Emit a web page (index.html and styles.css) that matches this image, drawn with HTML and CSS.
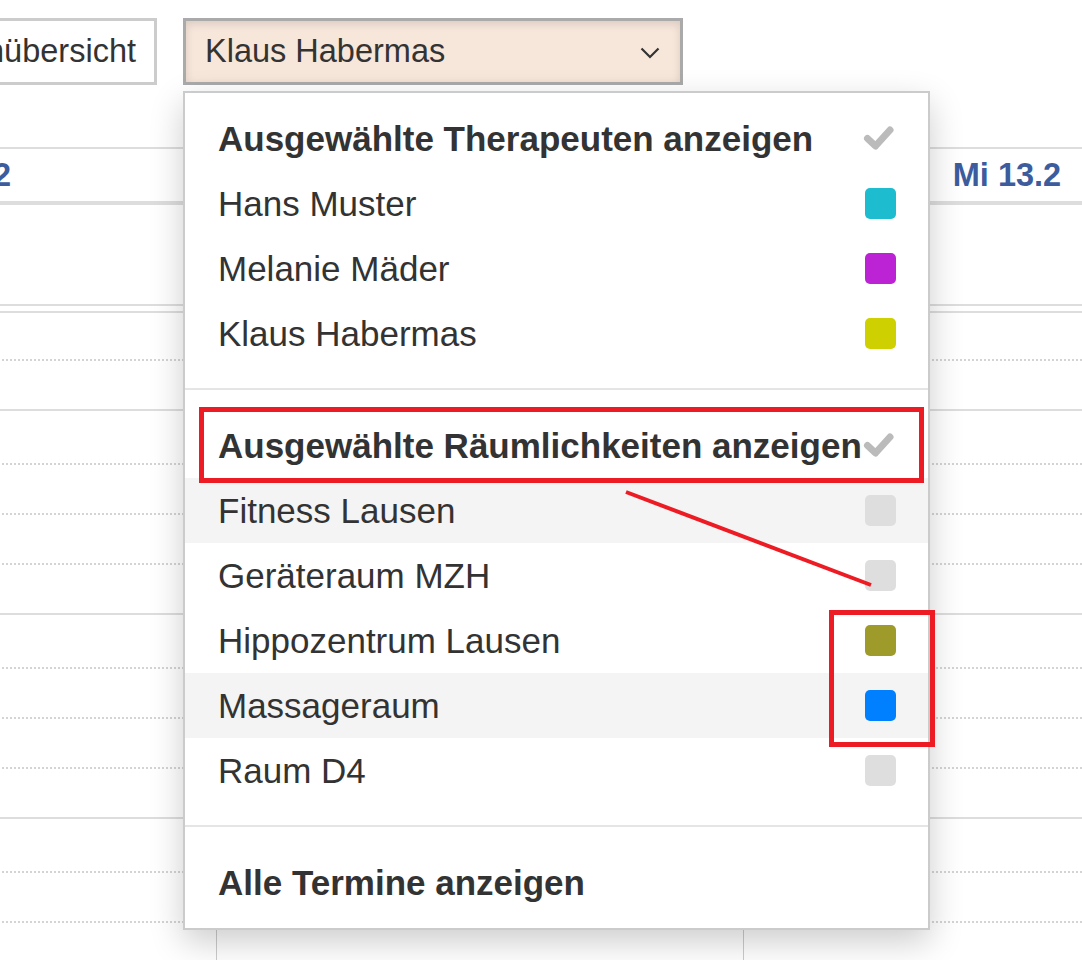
FILE: index.html
```html
<!DOCTYPE html>
<html lang="de">
<head>
<meta charset="utf-8">
<title>Kalender</title>
<link rel="stylesheet" href="styles.css">
</head>
<body>
<div class="page">
  <div class="toolbar">
    <div class="btn-view"><span>Wochenübersicht</span></div>
    <div class="select-btn">
      <span>Klaus Habermas</span>
      <svg class="chev" width="20" height="12" viewBox="0 0 20 12"><polyline points="1.5,1.5 10,10 18.5,1.5" fill="none" stroke="#333" stroke-width="2.2"/></svg>
    </div>
  </div>

  <div class="calendar">
    <div class="day">
      <div class="day-head">Mo 11.2</div>
      <div class="allday"></div>
      <div class="slots">
        <div class="slot first"></div><div class="slot hour"></div>
        <div class="slot q1"></div><div class="slot"></div><div class="slot"></div><div class="slot hour"></div>
        <div class="slot q1"></div><div class="slot"></div><div class="slot"></div><div class="slot hour"></div>
        <div class="slot q1"></div><div class="slot"></div><div class="slot"></div>
      </div>
    </div>
    <div class="day">
      <div class="day-head">Di 12.2</div>
      <div class="allday"></div>
      <div class="slots">
        <div class="slot first"></div><div class="slot hour"></div>
        <div class="slot q1"></div><div class="slot"></div><div class="slot"></div><div class="slot hour"></div>
        <div class="slot q1"></div><div class="slot"></div><div class="slot"></div><div class="slot hour"></div>
        <div class="slot q1"></div><div class="slot"></div><div class="slot"></div>
      </div>
    </div>
    <div class="day">
      <div class="day-head">Mi 13.2</div>
      <div class="allday"></div>
      <div class="slots">
        <div class="slot first"></div><div class="slot hour"></div>
        <div class="slot q1"></div><div class="slot"></div><div class="slot"></div><div class="slot hour"></div>
        <div class="slot q1"></div><div class="slot"></div><div class="slot"></div><div class="slot hour"></div>
        <div class="slot q1"></div><div class="slot"></div><div class="slot"></div>
      </div>
    </div>
  </div>

  <div class="menu">
    <div class="item head">
      <span class="label">Ausgewählte Therapeuten anzeigen</span>
      <svg class="check" width="33" height="28" viewBox="0 0 33 28"><polyline points="4.5,13.5 12.5,21 27,5" fill="none" stroke="#bbb" stroke-width="7" stroke-linecap="round" stroke-linejoin="round"/></svg>
    </div>
    <div class="item"><span class="label">Hans Muster</span><span class="swatch sw-teal"></span></div>
    <div class="item"><span class="label">Melanie Mäder</span><span class="swatch sw-magenta"></span></div>
    <div class="item"><span class="label">Klaus Habermas</span><span class="swatch sw-yellow"></span></div>
    <div class="divider"></div>
    <div class="item head">
      <span class="label">Ausgewählte Räumlichkeiten anzeigen</span>
      <svg class="check" width="33" height="28" viewBox="0 0 33 28"><polyline points="4.5,13.5 12.5,21 27,5" fill="none" stroke="#bbb" stroke-width="7" stroke-linecap="round" stroke-linejoin="round"/></svg>
    </div>
    <div class="item active"><span class="label">Fitness Lausen</span><span class="swatch sw-gray"></span></div>
    <div class="item"><span class="label">Geräteraum MZH</span><span class="swatch sw-gray"></span></div>
    <div class="item"><span class="label">Hippozentrum Lausen</span><span class="swatch sw-olive"></span></div>
    <div class="item active"><span class="label">Massageraum</span><span class="swatch sw-blue"></span></div>
    <div class="item"><span class="label">Raum D4</span><span class="swatch sw-gray"></span></div>
    <div class="divider"></div>
    <div class="item head"><span class="label">Alle Termine anzeigen</span></div>
  </div>

  <div class="mark mark-head"></div>
  <div class="mark mark-swatches"></div>
  <svg class="mark-line" width="1082" height="960" viewBox="0 0 1082 960"><line x1="626" y1="492" x2="871" y2="585" stroke="#ed1c24" stroke-width="4"/></svg>
</div>
</body>
</html>
```

FILE: styles.css
```css
* { box-sizing: border-box; }

html, body {
  margin: 0;
  padding: 0;
  background: #fff;
}

body {
  font-family: "Liberation Sans", Arial, "Helvetica Neue", sans-serif;
  color: #333;
}

.page {
  position: relative;
  width: 1082px;
  height: 960px;
  overflow: hidden;
}

/* toolbar */
.toolbar {
  display: flex;
  gap: 26px;
  padding-top: 18px;
  height: 85px;
}

.btn-view {
  width: 160px;
  height: 67px;
  margin-left: -3px;
  border: 3px solid #ccc;
  background: #fff;
  display: flex;
  align-items: center;
  justify-content: flex-end;
  padding-right: 18px;
  overflow: hidden;
  white-space: nowrap;
  font-size: 32.5px;
  color: #333;
}

.select-btn {
  width: 500px;
  height: 67px;
  border: 3px solid #aaa;
  background: #f7e6da;
  box-shadow: inset 0 3px 8px rgba(0, 0, 0, 0.12);
  display: flex;
  align-items: center;
  justify-content: space-between;
  padding: 0 20px 0 19px;
  font-size: 32.5px;
  color: #333;
  white-space: nowrap;
}

.chev { display: block; margin-top: 2px; }

/* calendar */
.calendar {
  display: grid;
  grid-template-columns: 527px 527px 527px;
  margin-top: 62px;
  margin-left: -311px;
}

.day + .day { border-left: 1px solid #ccc; }

.day-head {
  height: 58px;
  border-top: 2px solid #ddd;
  border-bottom: 4px solid #ddd;
  display: flex;
  align-items: center;
  justify-content: center;
  font-weight: bold;
  font-size: 32.5px;
  color: #3d5c9e;
  white-space: nowrap;
}

.allday {
  height: 101px;
  border-bottom: 2px solid #ddd;
}

.slots {
  margin-top: 5px;
  border-top: 2px solid #ddd;
}

.slot {
  height: 50px;
  border-bottom: 2px dotted #d4d4d4;
}

.slot.first { height: 48px; }
.slot.q1 { height: 54px; }
.slot.hour { border-bottom: 2px solid #ddd; }

/* dropdown menu */
.menu {
  position: absolute;
  left: 183px;
  top: 91px;
  width: 747px;
  background: #fff;
  border: 2px solid #cbcbcb;
  padding: 13px 0;
  box-shadow: 0 12px 32px rgba(0, 0, 0, 0.2);
}

.item {
  height: 65px;
  display: flex;
  align-items: center;
  justify-content: space-between;
  padding: 0 32px 0 33px;
  font-size: 35px;
  color: #333;
  white-space: nowrap;
}

.item.head {
  font-weight: bold;
  font-size: 35px;
}

.item.active { background: #f4f4f4; }

.check { display: block; flex-shrink: 0; }

.divider {
  height: 2px;
  background: #e5e5e5;
  margin: 22px 0 23px;
}

.swatch {
  width: 31px;
  height: 31px;
  border-radius: 5px;
  flex-shrink: 0;
}

.sw-teal { background: #1dbccf; }
.sw-magenta { background: #bb23d4; }
.sw-yellow { background: #cfd001; }
.sw-olive { background: #9e9b2b; }
.sw-blue { background: #0080fe; }
.sw-gray { background: #dedede; }

/* red annotations */
.mark {
  position: absolute;
  border: 5px solid #ed1c24;
}

.mark-head {
  left: 199px;
  top: 407px;
  width: 725px;
  height: 76px;
}

.mark-swatches {
  left: 829px;
  top: 610px;
  width: 106px;
  height: 137px;
}

.mark-line {
  position: absolute;
  left: 0;
  top: 0;
  pointer-events: none;
}
```
